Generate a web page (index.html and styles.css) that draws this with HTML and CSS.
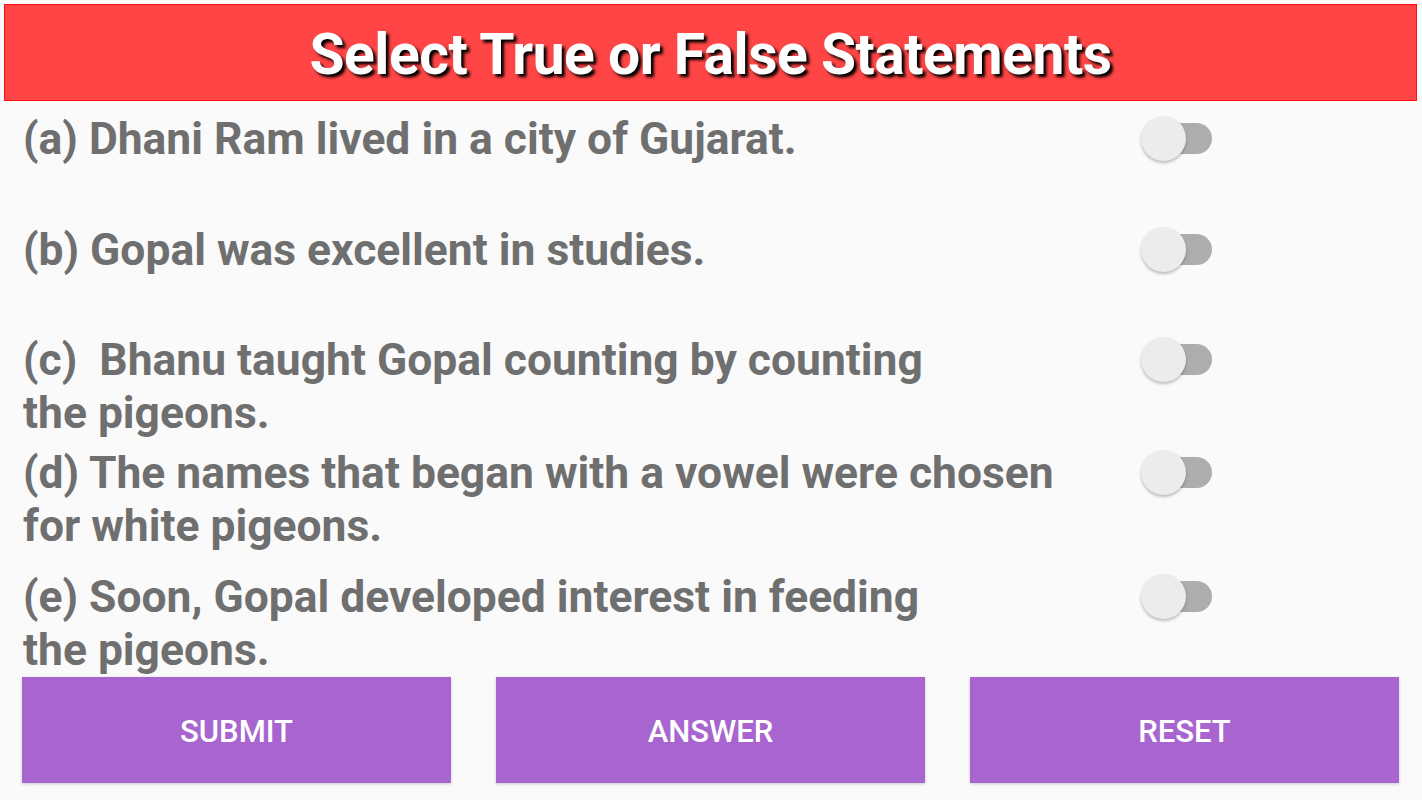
FILE: index.html
```html
<!DOCTYPE html>
<html>
<head>
<meta charset="utf-8">
<link rel="stylesheet" href="styles.css">
</head>
<body>
<div class="screen">
  <header class="title-bar"><h1 class="title">Select True or False Statements</h1></header>
  <main class="list">
    <div class="row row-a">
      <p class="stmt">(a) Dhani Ram lived in a city of Gujarat.</p>
      <span class="switch"><span class="track"></span><span class="thumb"></span></span>
    </div>
    <div class="row row-b">
      <p class="stmt">(b) Gopal was excellent in studies.</p>
      <span class="switch"><span class="track"></span><span class="thumb"></span></span>
    </div>
    <div class="row row-c">
      <p class="stmt">(c)&nbsp; Bhanu taught Gopal counting by counting<br>the pigeons.</p>
      <span class="switch"><span class="track"></span><span class="thumb"></span></span>
    </div>
    <div class="row row-d">
      <p class="stmt">(d) The names that began with a vowel were chosen<br>for white pigeons.</p>
      <span class="switch"><span class="track"></span><span class="thumb"></span></span>
    </div>
    <div class="row row-e">
      <p class="stmt">(e) Soon, Gopal developed interest in feeding<br>the pigeons.</p>
      <span class="switch"><span class="track"></span><span class="thumb"></span></span>
    </div>
  </main>
  <footer class="actions">
    <button class="btn">SUBMIT</button>
    <button class="btn">ANSWER</button>
    <button class="btn">RESET</button>
  </footer>
</div>
</body>
</html>
```

FILE: styles.css
```css
* { box-sizing: border-box; }
html, body { margin: 0; padding: 0; background: #fafafa; }
body { width: 1422px; height: 800px; overflow: hidden; font-family: Roboto, "Liberation Sans", sans-serif; }
.screen { display: flex; flex-direction: column; height: 800px; }
.title-bar {
  margin: 4px 5px 0 4px;
  height: 97px;
  background: #ff4545;
  border: 1px solid #ff0f0f;
  display: flex; align-items: center; justify-content: center;
  padding-top: 4px;
}
.title {
  margin: 0;
  font-size: 57px;
  line-height: 1;
  font-weight: 700;
  color: #ffffff;
  letter-spacing: -0.5px;
  text-shadow: 3px 3px 3px #000000;
}
.list { display: flex; flex-direction: column; padding: 12px 0 0 23px; }
.row { display: flex; align-items: flex-start; }
.row-a { height: 111px; }
.row-b { height: 110px; }
.row-c { height: 113px; }
.row-d { height: 124px; }
.row-e { height: 106px; }
.stmt {
  margin: 0;
  width: 1114px;
  font-size: 44.4px;
  font-weight: 700;
  line-height: 53px;
  color: #6f6f6f;
}
.switch { position: relative; width: 71px; height: 53px; margin-left: 4px; top: -1px; }
.track {
  position: absolute; left: 4px; right: 0; top: 11px; height: 31px;
  border-radius: 16px; background: #adadad;
}
.thumb {
  position: absolute; left: 0; top: 4px; width: 45px; height: 45px;
  border-radius: 50%; background: #ececec;
  box-shadow: 0 2px 3px rgba(0,0,0,0.25);
}
.actions { display: flex; gap: 45px; padding: 0 23px 0 22px; }
.btn {
  flex: 1 1 0; height: 106px; border: none; margin: 0;
  background: #a965cf; color: #ffffff;
  font-family: Roboto, "Liberation Sans", sans-serif;
  font-size: 31px; font-weight: 500;
  padding-top: 4px;
  box-shadow: 0 1px 3px rgba(0,0,0,0.2);
}
```
